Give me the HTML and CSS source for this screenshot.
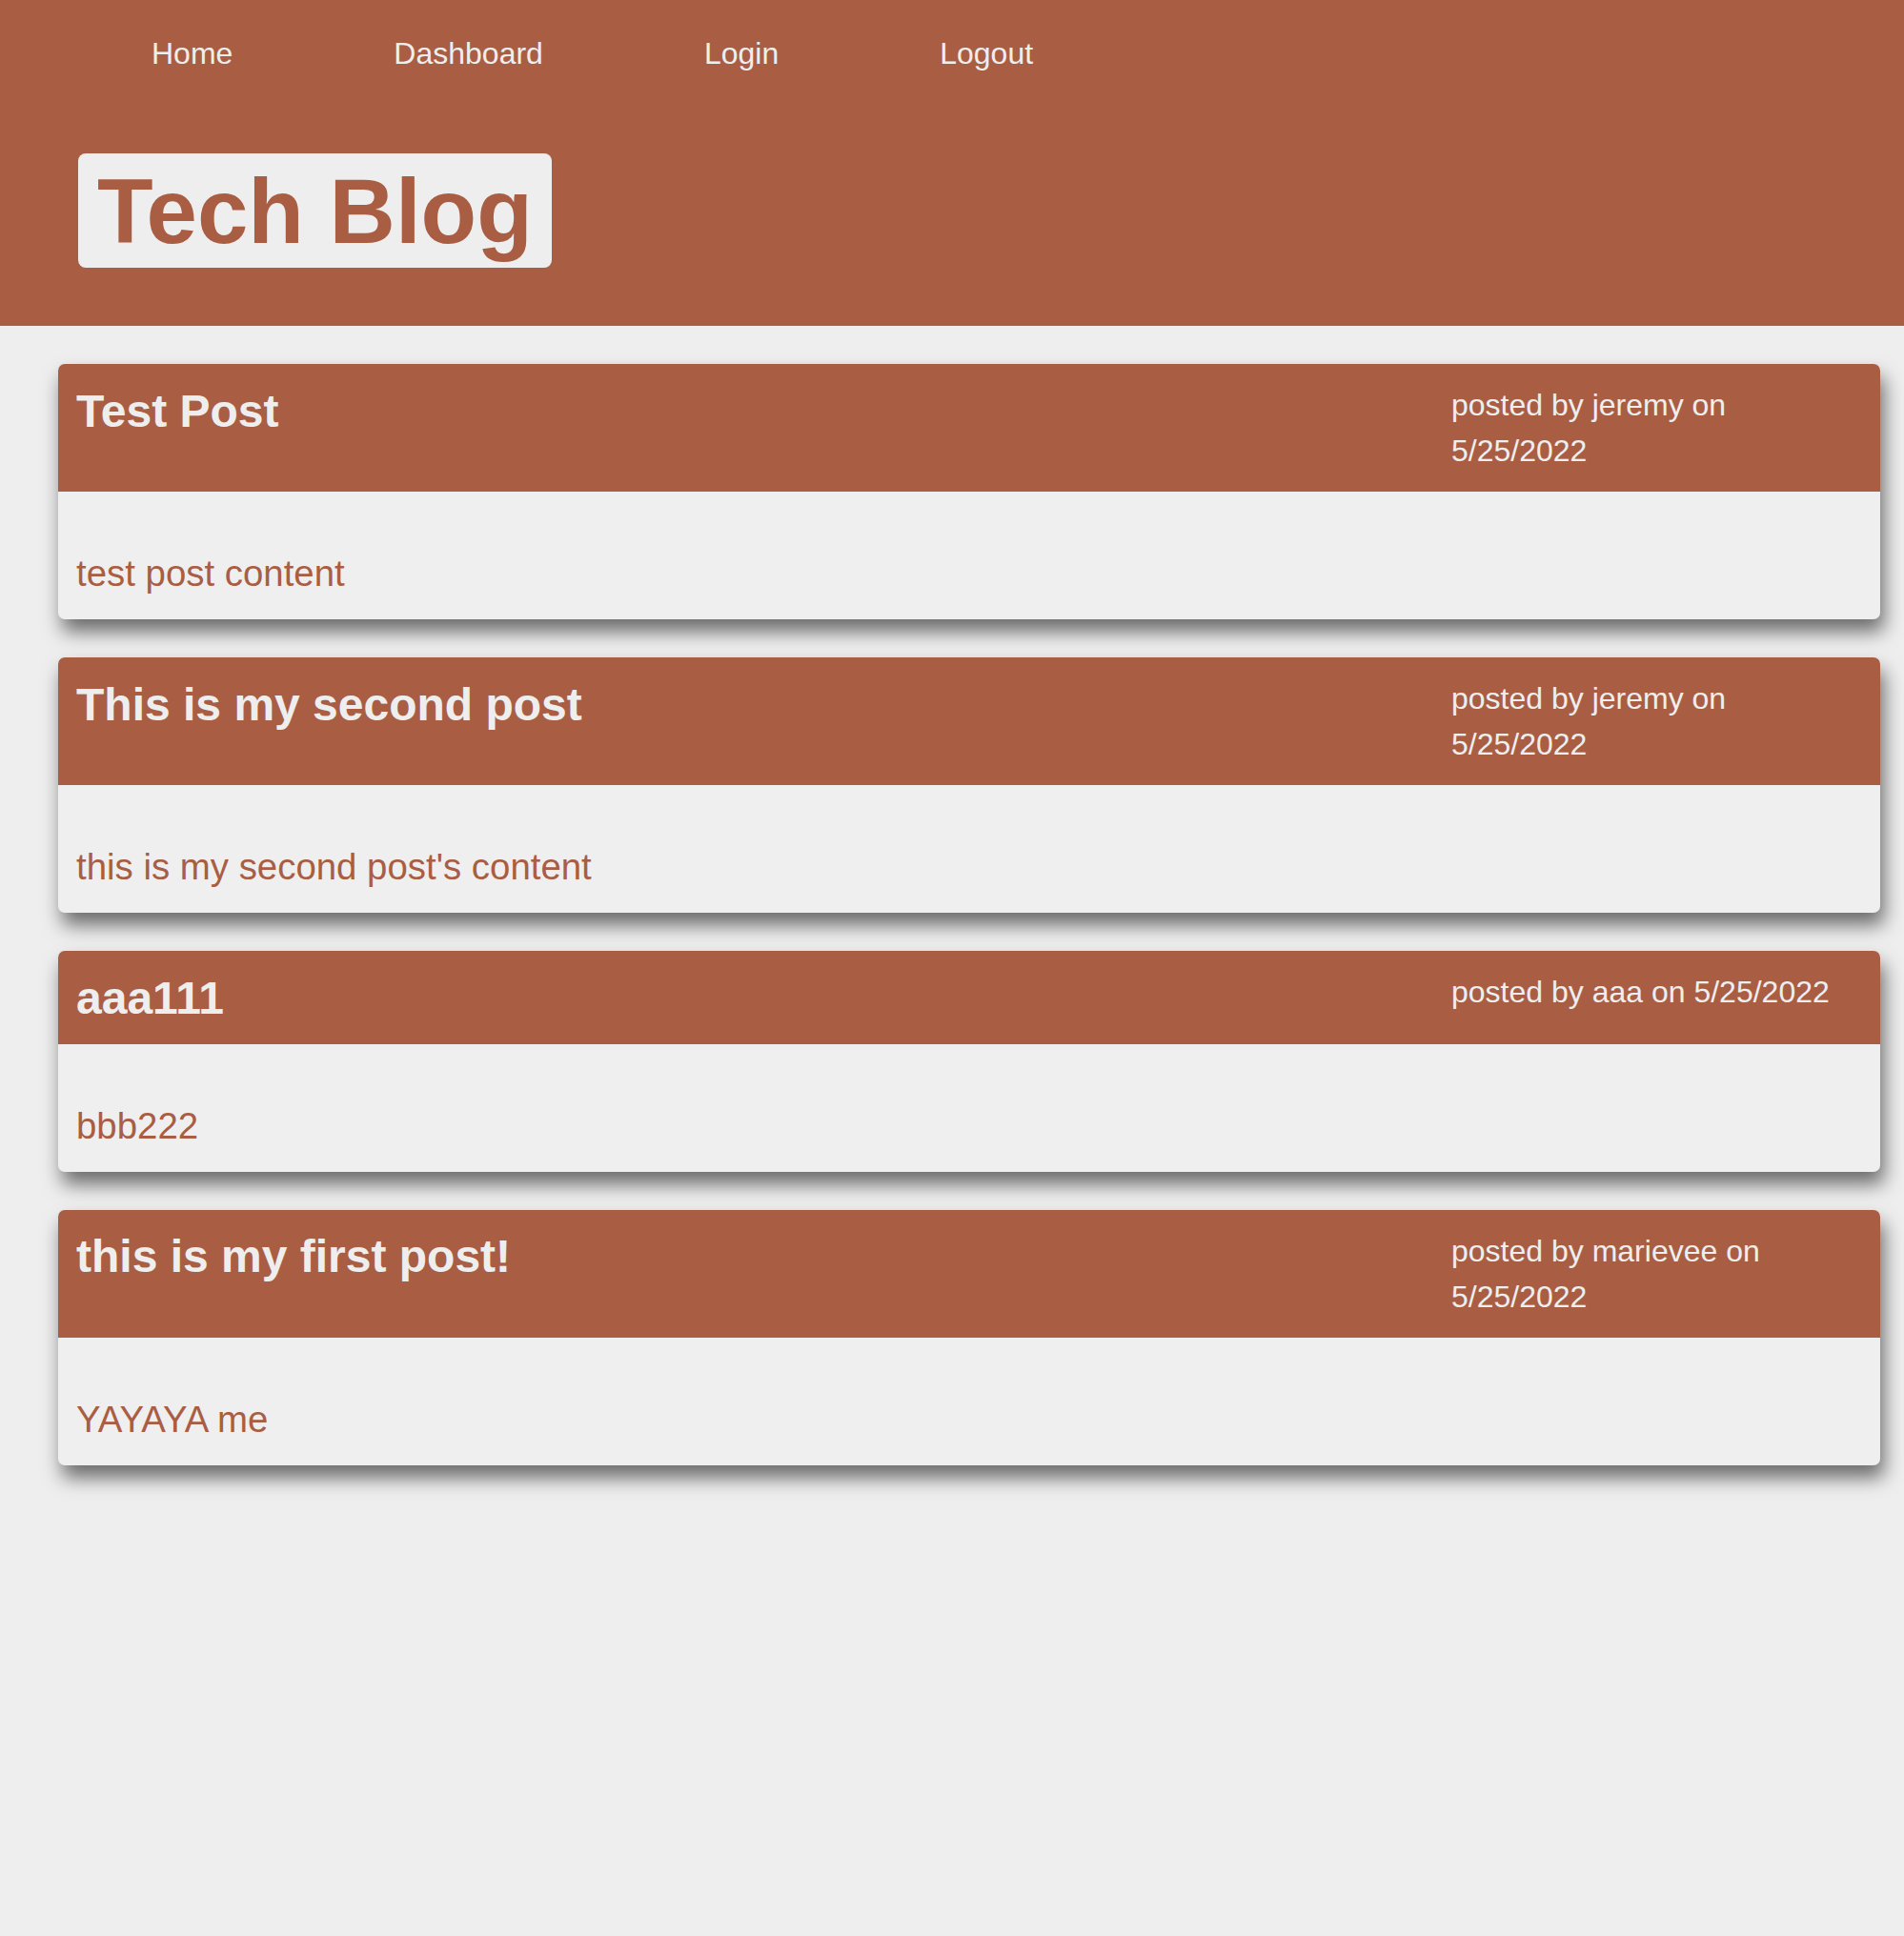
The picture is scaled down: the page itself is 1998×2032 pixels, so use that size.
FILE: index.html
```html
<!DOCTYPE html>
<html lang="en">
<head>
<meta charset="utf-8">
<title>Tech Blog</title>
<link rel="stylesheet" href="styles.css">
</head>
<body>
<header class="site-header">
  <nav class="nav">
    <a class="nav-link" href="#">Home</a>
    <a class="nav-link" href="#">Dashboard</a>
    <a class="nav-link" href="#">Login</a>
    <a class="nav-link" href="#">Logout</a>
  </nav>
  <h1 class="brand">Tech Blog</h1>
</header>
<main class="posts">
  <article class="post">
    <div class="post-head">
      <h2 class="post-title">Test Post</h2>
      <div class="post-meta">posted by jeremy on 5/25/2022</div>
    </div>
    <div class="post-body"><p>test post content</p></div>
  </article>
  <article class="post">
    <div class="post-head">
      <h2 class="post-title">This is my second post</h2>
      <div class="post-meta">posted by jeremy on 5/25/2022</div>
    </div>
    <div class="post-body"><p>this is my second post's content</p></div>
  </article>
  <article class="post">
    <div class="post-head">
      <h2 class="post-title">aaa111</h2>
      <div class="post-meta">posted by aaa on 5/25/2022</div>
    </div>
    <div class="post-body"><p>bbb222</p></div>
  </article>
  <article class="post">
    <div class="post-head">
      <h2 class="post-title">this is my first post!</h2>
      <div class="post-meta">posted by marievee on 5/25/2022</div>
    </div>
    <div class="post-body"><p>YAYAYA me</p></div>
  </article>
</main>
</body>
</html>
```

FILE: styles.css
```css
* { box-sizing: border-box; }

body {
  margin: 0;
  background: #eeeeee;
  font-family: "Liberation Sans", Helvetica, Arial, sans-serif;
  color: #a95e44;
}

.site-header {
  background: #a95e44;
  padding: 38px 0 61px 0;
}

.nav {
  display: flex;
  gap: 169px;
  padding-left: 159px;
}

.nav-link {
  color: #eeeeee;
  text-decoration: none;
  font-size: 32px;
  line-height: 37px;
}

.brand {
  display: inline-block;
  margin: 86px 0 0 82px;
  padding: 6px 20px 4px 20px;
  background: #eeeeee;
  color: #a95e44;
  border-radius: 8px;
  font-size: 96px;
  line-height: 110px;
  font-weight: bold;
}

.posts {
  display: flex;
  flex-direction: column;
  gap: 40px;
  padding: 40px 25px 40px 61px;
}

.post {
  background: #efefef;
  border-radius: 7px;
  overflow: hidden;
  box-shadow: 4px 13px 20px rgba(0, 0, 0, 0.55);
}

.post-head {
  display: flex;
  justify-content: space-between;
  align-items: flex-start;
  background: #a95e44;
  color: #eeeeee;
  padding: 19.2px 30px 19.2px 19px;
}

.post-title {
  margin: 2.4px 0;
  font-size: 48px;
  line-height: 55.2px;
  font-weight: bold;
}

.post-meta {
  width: 420px;
  flex: none;
  font-size: 32px;
  line-height: 48px;
}

.post-body {
  padding: 64px 19px 25.6px 19px;
}

.post-body p {
  margin: 0;
  font-size: 38.4px;
  line-height: 44px;
}
```
